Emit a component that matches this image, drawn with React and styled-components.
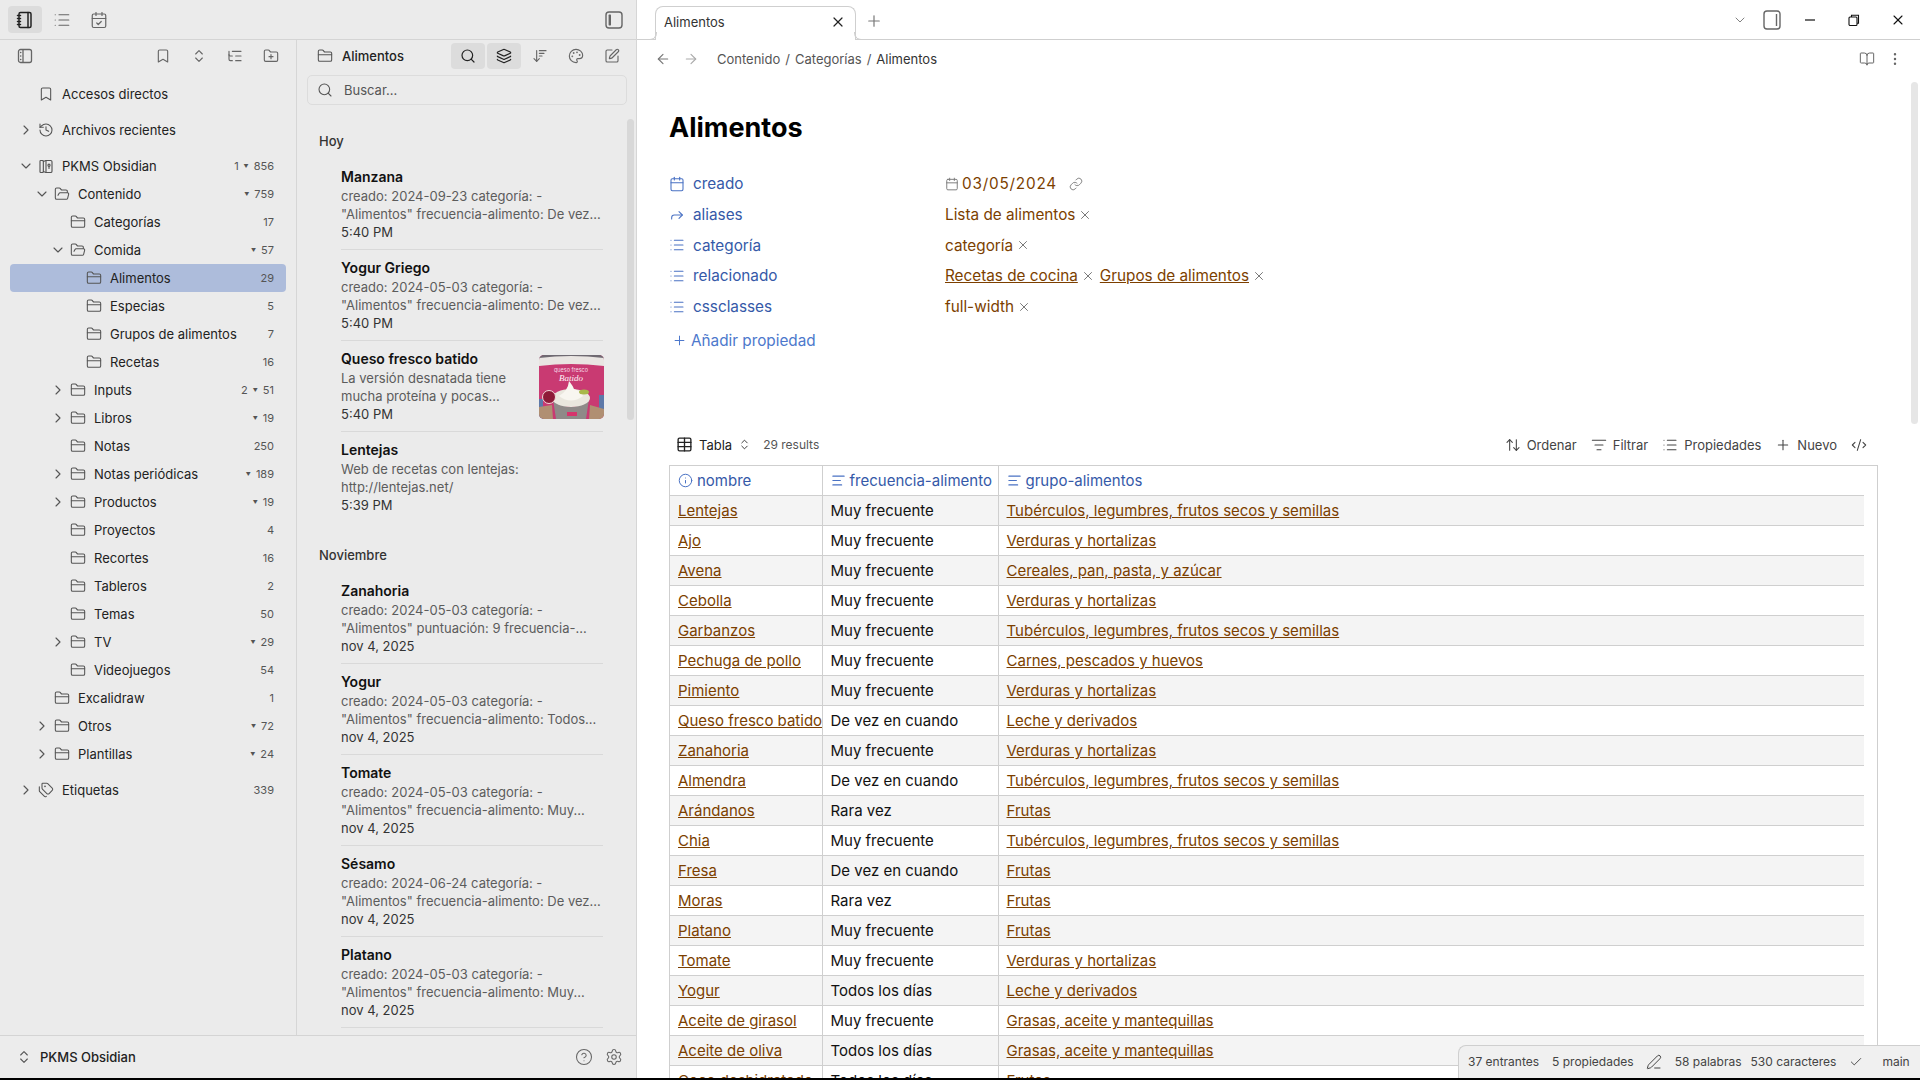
import React from "react";
import styled, { createGlobalStyle } from "styled-components";
import {
  ArrowDownWideNarrow,
  ArrowLeft,
  ArrowRight,
  ArrowUpDown,
  Bookmark,
  BookOpen,
  Calendar,
  CalendarCheck,
  Check,
  ChevronDown,
  ChevronRight,
  ChevronsUpDown,
  CircleHelp,
  CodeXml,
  EllipsisVertical,
  FolderClosed,
  FolderOpen,
  FolderPlus,
  Forward,
  History,
  Info,
  Layers,
  Link,
  List,
  ListFilter,
  ListTree,
  Notebook,
  Palette,
  PenLine,
  Plus,
  Search,
  Settings,
  SquarePen,
  Table,
  Tags,
  Text,
  X,
} from "lucide-react";

const GlobalStyle = createGlobalStyle`
  html, body {
    margin: 0;
    height: 100%;
    overflow: hidden;
    font-family: Inter, "Liberation Sans", sans-serif;
  }
  * {
    box-sizing: border-box;
  }
`;

const Screen = styled.div`
  display: flex;
  width: 1920px;
  height: 1080px;
  padding-bottom: 2px;
  background: #000;
  overflow: hidden;
`;

const Sidebar = styled.aside`
  display: flex;
  flex-direction: column;
  width: 637px;
  background: #ebebeb;
  border-right: 1px solid #d6d6d6;
`;

const SideTop = styled.div`
  display: flex;
  align-items: center;
  justify-content: space-between;
  height: 40px;
  padding: 0 5px 0 8px;
  border-bottom: 1px solid #d4d4d4;
`;

const IconGroup = styled.div`
  display: flex;
  align-items: center;
  gap: ${(p) => p.$gap ?? 2}px;
`;

const IconBtn = styled.div`
  display: flex;
  align-items: center;
  justify-content: center;
  width: ${(p) => p.$w ?? 34}px;
  height: ${(p) => p.$h ?? 26}px;
  border-radius: 4px;
  color: ${(p) => (p.$dark ? "#222" : "#666")};
  background: ${(p) => (p.$active ? "#dcdcdc" : "transparent")};
`;

const Panes = styled.div`
  display: flex;
  flex: 1;
  min-height: 0;
`;

const TreePane = styled.div`
  width: 297px;
  border-right: 1px solid #d6d6d6;
`;

const TreeTools = styled.div`
  display: flex;
  align-items: center;
  justify-content: space-between;
  height: 32px;
  padding: 0 8px;
`;

const Tree = styled.div`
  padding-top: 8px;
`;

const TreeSection = styled.div`
  margin-bottom: 8px;
`;

const TreeRow = styled.div`
  display: flex;
  align-items: center;
  height: 28px;
  margin: 0 10px;
  padding-left: ${(p) => 8 + p.$level * 16}px;
  padding-right: 12px;
  border-radius: 4px;
  font-size: 13px;
  color: #222;
  background: ${(p) => (p.$selected ? "#adbcdb" : "transparent")};
`;

const Chevron = styled.span`
  display: flex;
  align-items: center;
  justify-content: center;
  width: 16px;
  margin-right: 4px;
  color: #555;
`;

const RowIcon = styled.span`
  display: flex;
  align-items: center;
  justify-content: center;
  width: 16px;
  margin-right: 8px;
  color: #555;
`;

const RowLabel = styled.span`
  flex: 1;
  white-space: nowrap;
`;

const Count = styled.span`
  display: flex;
  align-items: center;
  gap: 5px;
  font-size: 11px;
  color: #555;
`;

const CountMark = styled.span`
  font-size: 5px;
  color: #555;
`;

const NotesPane = styled.div`
  position: relative;
  display: flex;
  flex-direction: column;
  flex: 1;
  min-width: 0;
`;

const NotesTools = styled.div`
  display: flex;
  align-items: center;
  justify-content: space-between;
  height: 32px;
  padding: 0 7px 0 20px;
`;

const NotesTitle = styled.div`
  display: flex;
  align-items: center;
  gap: 9px;
  font-size: 13px;
  font-weight: 500;
  color: #222;
  svg {
    color: #555;
  }
`;

const SearchBox = styled.div`
  display: flex;
  align-items: center;
  gap: 11px;
  height: 30px;
  margin: 3px 9px 0 10px;
  padding-left: 9px;
  border: 1px solid #dcdcdc;
  border-radius: 5px;
  font-size: 13px;
  color: #555;
`;

const NotesScroll = styled.div`
  flex: 1;
  min-height: 0;
  padding: 27px 0 0 22px;
  overflow: hidden;
`;

const Thumb = styled.div`
  position: absolute;
  top: 14px;
  right: -1px;
  width: 65px;
  height: 64px;
  border-radius: 5px;
  overflow: hidden;
`;

const NotesBar = styled.div`
  position: absolute;
  top: 79px;
  right: 2px;
  width: 7px;
  height: 301px;
  border-radius: 4px;
  background: #d8d8d8;
`;

const GroupHead = styled.div`
  height: 18px;
  margin-top: ${(p) => (p.$first ? 0 : 23)}px;
  margin-bottom: 9px;
  font-size: 13px;
  line-height: 18px;
  font-weight: 500;
  color: #333;
`;

const NoteItem = styled.div`
  position: relative;
  width: 262px;
  margin-left: 22px;
  padding: 9px 0 8px;
  border-bottom: 1px solid ${(p) => (p.$last ? "transparent" : "#d9d9d9")};
`;

const NoteTitle = styled.div`
  margin-bottom: 1px;
  font-size: 14px;
  line-height: 18px;
  font-weight: 600;
  color: #111;
`;

const NoteLine = styled.div`
  font-size: 13px;
  line-height: 18px;
  white-space: nowrap;
  color: ${(p) => (p.$date ? "#333" : "#5c5c5c")};
`;

const SideFoot = styled.div`
  display: flex;
  align-items: center;
  height: 43px;
  padding: 0 7px 0 16px;
  border-top: 1px solid #d4d4d4;
  font-size: 13px;
  font-weight: 500;
  color: #222;
  background: #ececec;
`;

const FootName = styled.span`
  flex: 1;
  margin-left: 8px;
`;

const Main = styled.main`
  position: relative;
  display: flex;
  flex-direction: column;
  flex: 1;
  min-width: 0;
  background: #fff;
  overflow: hidden;
`;

const TabBar = styled.div`
  display: flex;
  align-items: flex-end;
  height: 40px;
  padding-left: 18px;
  border-bottom: 1px solid #cfcfcf;
`;

const Tab = styled.div`
  position: relative;
  display: flex;
  align-items: center;
  justify-content: space-between;
  width: 201px;
  height: 34px;
  margin-bottom: -1px;
  padding: 0 9px 3px 8px;
  border: 1px solid #cfcfcf;
  border-bottom: none;
  border-radius: 8px 8px 0 0;
  background: #fff;
  font-size: 13px;
  color: #333;
  &::before,
  &::after {
    content: "";
    position: absolute;
    bottom: 0;
    width: 7px;
    height: 7px;
    border-bottom: 1px solid #cfcfcf;
  }
  &::before {
    left: -7px;
    border-right: 1px solid #cfcfcf;
    border-bottom-right-radius: 7px;
  }
  &::after {
    right: -7px;
    border-left: 1px solid #cfcfcf;
    border-bottom-left-radius: 7px;
  }
`;

const NewTab = styled.div`
  display: flex;
  align-self: center;
  margin: 2px 0 0 9px;
  color: #777;
`;

const WindowTools = styled.div`
  display: flex;
  align-items: center;
  align-self: center;
  margin-left: auto;
  color: #111;
`;

const WinBtn = styled.div`
  display: flex;
  align-items: center;
  justify-content: center;
  width: ${(p) => p.$w ?? 44}px;
  color: ${(p) => p.$color ?? "#111"};
`;

const NavRow = styled.div`
  display: flex;
  align-items: center;
  height: 38px;
  padding: 0 17px 1px 18px;
`;

const NavArrow = styled.span`
  display: flex;
  width: 16px;
  margin-right: 12px;
  color: ${(p) => (p.$dim ? "#aaa" : "#777")};
`;

const Crumbs = styled.div`
  display: flex;
  flex: 1;
  gap: 5px;
  margin-left: 6px;
  font-size: 13px;
  color: #555;
`;

const CrumbNow = styled.span`
  color: #333;
`;

const NavIcon = styled.span`
  display: flex;
  margin-left: 12px;
  color: #666;
`;

const Page = styled.div`
  flex: 1;
  min-height: 0;
  padding-left: 32px;
`;

const Heading = styled.h1`
  margin: 33px 0 23.5px;
  font-size: 27px;
  line-height: 34px;
  font-weight: 700;
  color: #000;
`;

const PropRow = styled.div`
  display: flex;
  align-items: center;
  height: 30.7px;
  font-size: 15.3px;
`;

const PropKey = styled.div`
  display: flex;
  align-items: center;
  gap: 8px;
  width: 276px;
  color: #3559a8;
  svg {
    color: #4a72c4;
  }
`;

const PropValue = styled.div`
  display: flex;
  align-items: center;
  color: #7c3f00;
`;

const PropLink = styled.span`
  text-decoration: underline;
`;

const Remove = styled.span`
  display: flex;
  margin: 0 5px 0 3px;
  color: #666;
`;

const DateText = styled.span`
  margin-left: 3px;
  letter-spacing: 0.8px;
`;

const ValueIcon = styled.span`
  display: flex;
  margin-left: ${(p) => p.$ml ?? 0}px;
  color: #777;
`;

const AddProp = styled.div`
  display: flex;
  align-items: center;
  gap: 4px;
  height: 30px;
  margin: 4px 0 0 3px;
  font-size: 15.3px;
  color: #4d78cc;
`;

const BaseTools = styled.div`
  display: flex;
  align-items: center;
  height: 30px;
  margin: 74px 53px 5px 7px;
  font-size: 13px;
  color: #222;
`;

const BaseName = styled.div`
  display: flex;
  align-items: center;
  gap: 6px;
  flex: 1;
`;

const Results = styled.span`
  margin-left: 6px;
  font-size: 12px;
  color: #555;
`;

const BaseAction = styled.div`
  display: flex;
  align-items: center;
  gap: 6px;
  margin-left: 14px;
  color: #444;
  svg {
    color: #444;
  }
`;

const TableFrame = styled.div`
  width: 1209px;
  border: 1px solid #cfcfcf;
  border-bottom: none;
`;

const DataTable = styled.table`
  width: 1194px;
  table-layout: fixed;
  border-collapse: collapse;
  font-size: 15px;
  th,
  td {
    height: 30px;
    padding: 0 0 0 8px;
    text-align: left;
    white-space: nowrap;
    overflow: hidden;
    font-weight: 400;
    border-bottom: 1px solid #cfcfcf;
    border-right: 1px solid #cfcfcf;
  }
  th:last-child,
  td:last-child {
    border-right: none;
  }
  tbody tr:nth-child(odd) {
    background: #f4f4f4;
  }
  a {
    color: #7c3f00;
    text-decoration: underline;
  }
  td {
    color: #111;
  }
`;

const HeadCell = styled.span`
  display: flex;
  align-items: center;
  gap: 4px;
  color: #3559a8;
  svg {
    color: #4a72c4;
  }
`;

const MainBar = styled.div`
  position: absolute;
  top: 82px;
  right: 2px;
  width: 7px;
  height: 342px;
  border-radius: 4px;
  background: #e6e6e6;
`;

const StatusBar = styled.div`
  position: absolute;
  right: 0;
  bottom: 0;
  display: flex;
  align-items: center;
  width: 462px;
  height: 33px;
  padding: 0 0 1px 9px;
  border: 1px solid #cfcfcf;
  border-width: 1px 0 0 1px;
  border-radius: 8px 0 0 0;
  background: #f0f0f0;
  font-size: 12px;
  color: #444;
`;

const StatusItem = styled.span`
  display: flex;
  margin-right: ${(p) => p.$mr ?? 13}px;
  white-space: nowrap;
`;

const notebookIcon = <Notebook size={18} strokeWidth={2} />;

function VaultIcon() {
  return (
    <svg width="17" height="17" viewBox="0 0 24 24" fill="none" stroke="currentColor" strokeWidth="1.7" strokeLinecap="round" strokeLinejoin="round">
      <rect x="3" y="3" width="5" height="18" rx="1" />
      <path d="M8 4.5 12 3h7a2 2 0 0 1 2 2v14a2 2 0 0 1-2 2h-7l-4-1.5" />
      <path d="M12 3v18" />
      <circle cx="16.5" cy="10" r="1.6" />
      <path d="M16.5 11.6V15" />
    </svg>
  );
}

function PaneToggle() {
  return (
    <svg width="18" height="18" viewBox="0 0 18 18" fill="none" stroke="currentColor" strokeWidth="1.4">
      <rect x="1" y="1" width="16" height="16" rx="3" />
      <rect x="3.6" y="3.6" width="2.4" height="10.8" rx="0.6" fill="currentColor" stroke="none" />
    </svg>
  );
}

function RightPaneToggle() {
  return (
    <svg width="18" height="20" viewBox="0 0 18 20" fill="none" stroke="currentColor" strokeWidth="1.4">
      <rect x="1" y="1" width="16" height="18" rx="3" />
      <path d="M13.5 4v12" />
    </svg>
  );
}

function TreeLeftToggle() {
  return (
    <svg width="16" height="16" viewBox="0 0 16 16" fill="none" stroke="currentColor" strokeWidth="1.3">
      <rect x="1.5" y="1.5" width="13" height="13" rx="2" />
      <path d="M6 1.5v13" />
      <path d="M3.6 4.5h.2M3.6 8h.2M3.6 11.5h.2" strokeWidth="1.4" strokeLinecap="round" />
    </svg>
  );
}

function MinimizeIcon() {
  return (
    <svg width="12" height="12" viewBox="0 0 12 12" stroke="currentColor" strokeWidth="1.2">
      <path d="M1 6h10" />
    </svg>
  );
}

function RestoreIcon() {
  return (
    <svg width="12" height="12" viewBox="0 0 12 12" fill="none" stroke="currentColor" strokeWidth="1.1">
      <rect x="1" y="3" width="8" height="8.5" rx="1" />
      <path d="M3.5 3V1.2h7v8H9" />
    </svg>
  );
}

function QuesoPicture() {
  return (
    <svg width="65" height="64" viewBox="0 0 65 64">
      <rect width="65" height="64" fill="#c93a72" />
      <rect width="65" height="4" fill="#6f6a72" />
      <path d="M0 3 Q32 -1 65 3 V11 Q32 7 0 11Z" fill="#e9e5e2" />
      <path d="M0 44 H4 V64 H0Z M60 40 H65 V60 H60Z" fill="#5d78a8" />
      <path d="M0 52 L13 50 L14 64 H0Z M51 50 L65 54 V64 H50Z" fill="#b08f72" />
      <path d="M14 44 Q32 60 50 44 L47 64 H17Z" fill="#8f8a88" />
      <ellipse cx="32" cy="43" rx="19" ry="9" fill="#eae7de" />
      <path d="M20 41 Q29 36 30 26 Q34 31 35 34 Q42 36 44 41 Q32 50 20 41Z" fill="#f8f6f0" />
      <ellipse cx="45" cy="37" rx="5" ry="2.5" fill="#a9b84a" />
      <circle cx="10" cy="42" r="6.5" fill="#8e1a38" stroke="#f1dada" />
      <rect x="28" y="57" width="10" height="4" fill="#d6346c" />
      <text x="32" y="17" textAnchor="middle" fontSize="5.5" fill="#f6dbe6" fontFamily="Inter, sans-serif">queso fresco</text>
      <text x="32" y="26" textAnchor="middle" fontSize="9" fontStyle="italic" fill="#fff3f6" fontFamily="'Liberation Serif', serif">Batido</text>
    </svg>
  );
}

const treeSections = [
  [{ label: "Accesos directos", level: 0, icon: "bookmark" }],
  [{ label: "Archivos recientes", level: 0, icon: "history", closed: true }],
  [
    { label: "PKMS Obsidian", level: 0, icon: "vault", open: true, left: "1", count: "856" },
    { label: "Contenido", level: 1, icon: "open", open: true, count: "759", mark: true },
    { label: "Categorías", level: 2, count: "17" },
    { label: "Comida", level: 2, icon: "open", open: true, count: "57", mark: true },
    { label: "Alimentos", level: 3, count: "29", selected: true },
    { label: "Especias", level: 3, count: "5" },
    { label: "Grupos de alimentos", level: 3, count: "7" },
    { label: "Recetas", level: 3, count: "16" },
    { label: "Inputs", level: 2, closed: true, left: "2", count: "51" },
    { label: "Libros", level: 2, closed: true, count: "19", mark: true },
    { label: "Notas", level: 2, count: "250" },
    { label: "Notas periódicas", level: 2, closed: true, count: "189", mark: true },
    { label: "Productos", level: 2, closed: true, count: "19", mark: true },
    { label: "Proyectos", level: 2, count: "4" },
    { label: "Recortes", level: 2, count: "16" },
    { label: "Tableros", level: 2, count: "2" },
    { label: "Temas", level: 2, count: "50" },
    { label: "TV", level: 2, closed: true, count: "29", mark: true },
    { label: "Videojuegos", level: 2, count: "54" },
    { label: "Excalidraw", level: 1, count: "1" },
    { label: "Otros", level: 1, closed: true, count: "72", mark: true },
    { label: "Plantillas", level: 1, closed: true, count: "24", mark: true },
  ],
  [{ label: "Etiquetas", level: 0, icon: "tags", closed: true, count: "339" }],
];

const rowIcons = {
  bookmark: <Bookmark size={16} strokeWidth={1.6} />,
  history: <History size={16} strokeWidth={1.6} />,
  vault: <VaultIcon />,
  open: <FolderOpen size={16} strokeWidth={1.6} />,
  tags: <Tags size={16} strokeWidth={1.6} />,
};

const noteGroups = [
  {
    head: "Hoy",
    notes: [
      { title: "Manzana", lines: ["creado: 2024-09-23 categoría: -", "\"Alimentos\" frecuencia-alimento: De vez..."], date: "5:40 PM" },
      { title: "Yogur Griego", lines: ["creado: 2024-05-03 categoría: -", "\"Alimentos\" frecuencia-alimento: De vez..."], date: "5:40 PM" },
      { title: "Queso fresco batido", lines: ["La versión desnatada tiene", "mucha proteína y pocas..."], date: "5:40 PM", thumb: true },
      { title: "Lentejas", lines: ["Web de recetas con lentejas:", "http://lentejas.net/"], date: "5:39 PM" },
    ],
  },
  {
    head: "Noviembre",
    notes: [
      { title: "Zanahoria", lines: ["creado: 2024-05-03 categoría: -", "\"Alimentos\" puntuación: 9 frecuencia-..."], date: "nov 4, 2025" },
      { title: "Yogur", lines: ["creado: 2024-05-03 categoría: -", "\"Alimentos\" frecuencia-alimento: Todos..."], date: "nov 4, 2025" },
      { title: "Tomate", lines: ["creado: 2024-05-03 categoría: -", "\"Alimentos\" frecuencia-alimento: Muy..."], date: "nov 4, 2025" },
      { title: "Sésamo", lines: ["creado: 2024-06-24 categoría: -", "\"Alimentos\" frecuencia-alimento: De vez..."], date: "nov 4, 2025" },
      { title: "Platano", lines: ["creado: 2024-05-03 categoría: -", "\"Alimentos\" frecuencia-alimento: Muy..."], date: "nov 4, 2025" },
    ],
  },
];

const TUB = "Tubérculos, legumbres, frutos secos y semillas";
const VER = "Verduras y hortalizas";
const LEC = "Leche y derivados";
const FRU = "Frutas";
const GRA = "Grasas, aceite y mantequillas";
const MF = "Muy frecuente";
const DV = "De vez en cuando";
const RV = "Rara vez";
const TD = "Todos los días";

const foods = [
  ["Lentejas", MF, TUB],
  ["Ajo", MF, VER],
  ["Avena", MF, "Cereales, pan, pasta, y azúcar"],
  ["Cebolla", MF, VER],
  ["Garbanzos", MF, TUB],
  ["Pechuga de pollo", MF, "Carnes, pescados y huevos"],
  ["Pimiento", MF, VER],
  ["Queso fresco batido", DV, LEC],
  ["Zanahoria", MF, VER],
  ["Almendra", DV, TUB],
  ["Arándanos", RV, FRU],
  ["Chia", MF, TUB],
  ["Fresa", DV, FRU],
  ["Moras", RV, FRU],
  ["Platano", MF, FRU],
  ["Tomate", MF, VER],
  ["Yogur", TD, LEC],
  ["Aceite de girasol", MF, GRA],
  ["Aceite de oliva", TD, GRA],
  ["Coco deshidratado", TD, FRU],
];

const properties = [
  { key: "aliases", icon: <Forward size={16} strokeWidth={1.6} />, values: [{ text: "Lista de alimentos" }] },
  { key: "categoría", icon: <List size={16} strokeWidth={1.6} />, values: [{ text: "categoría" }] },
  { key: "relacionado", icon: <List size={16} strokeWidth={1.6} />, values: [{ text: "Recetas de cocina", link: true }, { text: "Grupos de alimentos", link: true }] },
  { key: "cssclasses", icon: <List size={16} strokeWidth={1.6} />, values: [{ text: "full-width" }] },
];

export default function App() {
  return (
    <Screen>
      <GlobalStyle />
      <Sidebar>
        <SideTop>
          <IconGroup $gap={3}>
            <IconBtn $active $dark $h={27}>{notebookIcon}</IconBtn>
            <IconBtn><List size={18} strokeWidth={1.6} /></IconBtn>
            <IconBtn><CalendarCheck size={18} strokeWidth={1.6} /></IconBtn>
          </IconGroup>
          <IconBtn><PaneToggle /></IconBtn>
        </SideTop>
        <Panes>
          <TreePane>
            <TreeTools>
              <IconBtn><TreeLeftToggle /></IconBtn>
              <IconGroup>
                <IconBtn><Bookmark size={16} strokeWidth={1.7} /></IconBtn>
                <IconBtn><ChevronsUpDown size={16} strokeWidth={1.7} /></IconBtn>
                <IconBtn><ListTree size={16} strokeWidth={1.7} /></IconBtn>
                <IconBtn><FolderPlus size={16} strokeWidth={1.7} /></IconBtn>
              </IconGroup>
            </TreeTools>
            <Tree>
              {treeSections.map((section, i) => (
                <TreeSection key={i}>
                  {section.map((row) => (
                    <TreeRow key={row.label} $level={row.level} $selected={row.selected}>
                      <Chevron>
                        {row.open && <ChevronDown size={16} strokeWidth={1.7} />}
                        {row.closed && <ChevronRight size={16} strokeWidth={1.7} />}
                      </Chevron>
                      <RowIcon>{rowIcons[row.icon] ?? <FolderClosed size={16} strokeWidth={1.6} />}</RowIcon>
                      <RowLabel>{row.label}</RowLabel>
                      {row.count && (
                        <Count>
                          {row.left && <span>{row.left}</span>}
                          {(row.left || row.mark) && <CountMark>▼</CountMark>}
                          <span>{row.count}</span>
                        </Count>
                      )}
                    </TreeRow>
                  ))}
                </TreeSection>
              ))}
            </Tree>
          </TreePane>
          <NotesPane>
            <NotesTools>
              <NotesTitle>
                <FolderClosed size={16} strokeWidth={1.6} />
                Alimentos
              </NotesTitle>
              <IconGroup>
                <IconBtn $active $dark><Search size={16} strokeWidth={1.8} /></IconBtn>
                <IconBtn $active $dark><Layers size={16} strokeWidth={1.8} /></IconBtn>
                <IconBtn><ArrowDownWideNarrow size={16} strokeWidth={1.7} /></IconBtn>
                <IconBtn><Palette size={16} strokeWidth={1.7} /></IconBtn>
                <IconBtn><SquarePen size={16} strokeWidth={1.7} /></IconBtn>
              </IconGroup>
            </NotesTools>
            <SearchBox>
              <Search size={16} strokeWidth={1.6} />
              Buscar...
            </SearchBox>
            <NotesScroll>
              {noteGroups.map((group, g) => (
                <div key={group.head}>
                  <GroupHead $first={g === 0}>{group.head}</GroupHead>
                  {group.notes.map((note) => (
                    <NoteItem key={note.title} $last={note.title === "Lentejas"}>
                      <NoteTitle>{note.title}</NoteTitle>
                      {note.lines.map((line) => (
                        <NoteLine key={line}>{line}</NoteLine>
                      ))}
                      <NoteLine $date>{note.date}</NoteLine>
                      {note.thumb && (
                        <Thumb>
                          <QuesoPicture />
                        </Thumb>
                      )}
                    </NoteItem>
                  ))}
                </div>
              ))}
            </NotesScroll>
            <NotesBar />
          </NotesPane>
        </Panes>
        <SideFoot>
          <ChevronsUpDown size={16} strokeWidth={1.6} color="#555" />
          <FootName>PKMS Obsidian</FootName>
          <IconBtn $w={30} $h={24}><CircleHelp size={18} strokeWidth={1.4} /></IconBtn>
          <IconBtn $w={30} $h={24}><Settings size={18} strokeWidth={1.4} /></IconBtn>
        </SideFoot>
      </Sidebar>
      <Main>
        <TabBar>
          <Tab>
            Alimentos
            <X size={16} strokeWidth={1.8} color="#222" />
          </Tab>
          <NewTab><Plus size={18} strokeWidth={1.6} /></NewTab>
          <WindowTools>
            <WinBtn $w={32} $color="#777"><ChevronDown size={16} strokeWidth={1.4} /></WinBtn>
            <WinBtn $w={32} $color="#666"><RightPaneToggle /></WinBtn>
            <WinBtn><MinimizeIcon /></WinBtn>
            <WinBtn><RestoreIcon /></WinBtn>
            <WinBtn><X size={16} strokeWidth={1.6} /></WinBtn>
          </WindowTools>
        </TabBar>
        <NavRow>
          <NavArrow><ArrowLeft size={16} strokeWidth={1.7} /></NavArrow>
          <NavArrow $dim><ArrowRight size={16} strokeWidth={1.7} /></NavArrow>
          <Crumbs>
            <span>Contenido</span>
            <span>/</span>
            <span>Categorías</span>
            <span>/</span>
            <CrumbNow>Alimentos</CrumbNow>
          </Crumbs>
          <NavIcon><BookOpen size={16} strokeWidth={1.5} /></NavIcon>
          <NavIcon><EllipsisVertical size={16} strokeWidth={1.7} /></NavIcon>
        </NavRow>
        <Page>
          <Heading>Alimentos</Heading>
          <PropRow>
            <PropKey><Calendar size={16} strokeWidth={1.6} />creado</PropKey>
            <PropValue>
              <ValueIcon><Calendar size={14} strokeWidth={1.6} /></ValueIcon>
              <DateText>03/05/2024</DateText>
              <ValueIcon $ml={12}><Link size={14} strokeWidth={1.5} /></ValueIcon>
            </PropValue>
          </PropRow>
          {properties.map((prop) => (
            <PropRow key={prop.key}>
              <PropKey>{prop.icon}{prop.key}</PropKey>
              <PropValue>
                {prop.values.map((value) =>
                  <React.Fragment key={value.text}>
                    {value.link ? <PropLink>{value.text}</PropLink> : <span>{value.text}</span>}
                    <Remove><X size={14} strokeWidth={1.5} /></Remove>
                  </React.Fragment>
                )}
              </PropValue>
            </PropRow>
          ))}
          <AddProp><Plus size={15} strokeWidth={1.6} />Añadir propiedad</AddProp>
          <BaseTools>
            <BaseName>
              <Table size={17} strokeWidth={1.9} />
              Tabla
              <ChevronsUpDown size={13} strokeWidth={1.6} />
              <Results>29 results</Results>
            </BaseName>
            <BaseAction><ArrowUpDown size={16} strokeWidth={1.6} />Ordenar</BaseAction>
            <BaseAction><ListFilter size={16} strokeWidth={1.6} />Filtrar</BaseAction>
            <BaseAction><List size={16} strokeWidth={1.6} />Propiedades</BaseAction>
            <BaseAction><Plus size={16} strokeWidth={1.6} />Nuevo</BaseAction>
            <BaseAction><CodeXml size={16} strokeWidth={1.6} /></BaseAction>
          </BaseTools>
          <TableFrame>
            <DataTable>
              <colgroup>
                <col width="152" />
                <col width="176" />
                <col />
              </colgroup>
              <thead>
                <tr>
                  <th><HeadCell><Info size={15} strokeWidth={1.6} />nombre</HeadCell></th>
                  <th><HeadCell><Text size={15} strokeWidth={1.8} />frecuencia-alimento</HeadCell></th>
                  <th><HeadCell><Text size={15} strokeWidth={1.8} />grupo-alimentos</HeadCell></th>
                </tr>
              </thead>
              <tbody>
                {foods.map(([name, freq, group]) => (
                  <tr key={name}>
                    <td><a>{name}</a></td>
                    <td>{freq}</td>
                    <td><a>{group}</a></td>
                  </tr>
                ))}
              </tbody>
            </DataTable>
          </TableFrame>
        </Page>
        <MainBar />
        <StatusBar>
          <StatusItem>37 entrantes</StatusItem>
          <StatusItem $mr={12}>5 propiedades</StatusItem>
          <StatusItem $mr={13}><PenLine size={16} strokeWidth={1.5} /></StatusItem>
          <StatusItem $mr={9}>58 palabras</StatusItem>
          <StatusItem>530 caracteres</StatusItem>
          <StatusItem $mr={19}><Check size={14} strokeWidth={1.6} /></StatusItem>
          <StatusItem $mr={0}>main</StatusItem>
        </StatusBar>
      </Main>
    </Screen>
  );
}
